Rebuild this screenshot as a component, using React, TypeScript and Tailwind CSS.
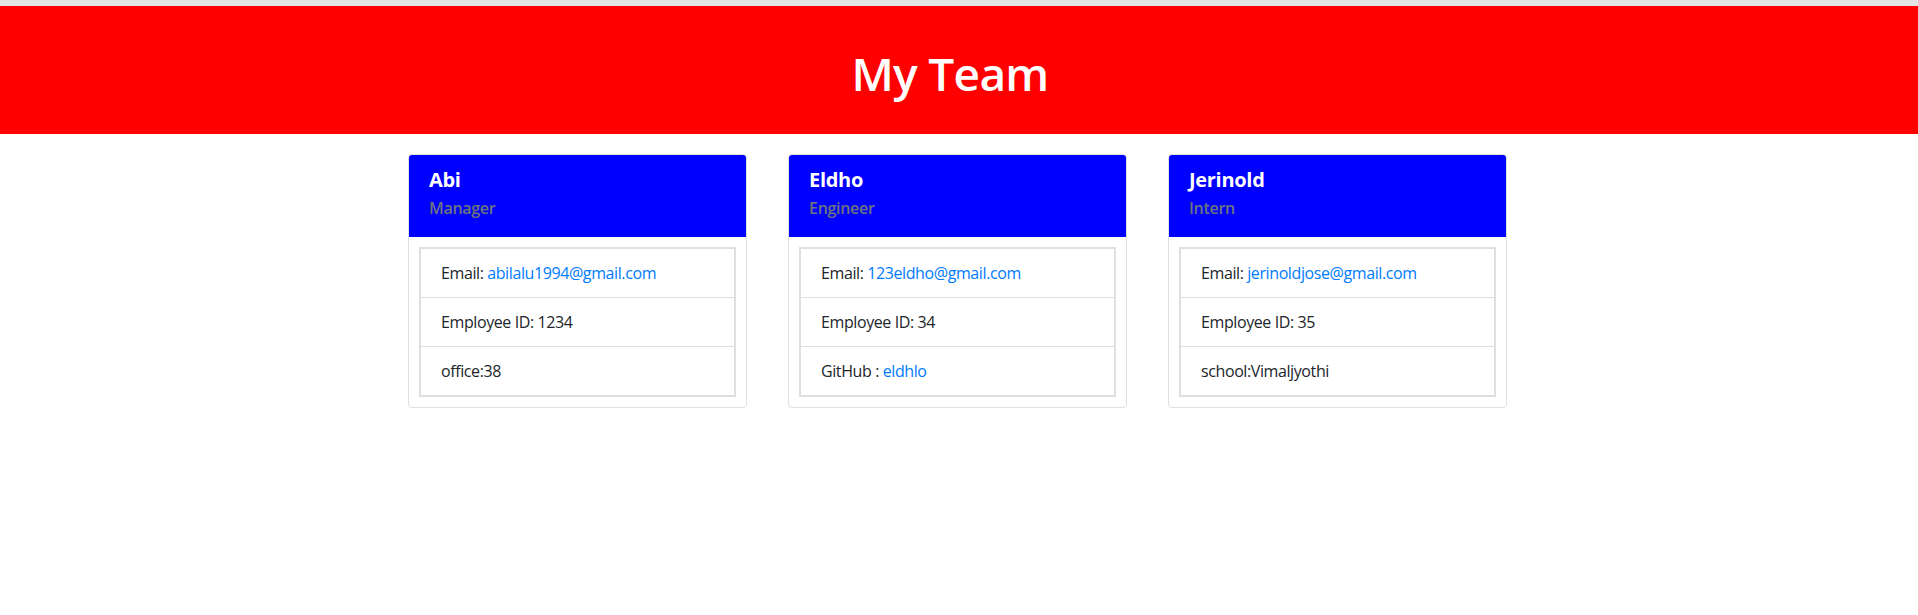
import React from "react";

type Row = { label: string; value: string; link?: boolean };
type Member = { name: string; role: string; rows: Row[] };

const team: Member[] = [
  {
    name: "Abi",
    role: "Manager",
    rows: [
      { label: "Email: ", value: "abilalu1994@gmail.com", link: true },
      { label: "Employee ID: ", value: "1234" },
      { label: "office:", value: "38" },
    ],
  },
  {
    name: "Eldho",
    role: "Engineer",
    rows: [
      { label: "Email: ", value: "123eldho@gmail.com", link: true },
      { label: "Employee ID: ", value: "34" },
      { label: "GitHub : ", value: "eldhlo", link: true },
    ],
  },
  {
    name: "Jerinold",
    role: "Intern",
    rows: [
      { label: "Email: ", value: "jerinoldjose@gmail.com", link: true },
      { label: "Employee ID: ", value: "35" },
      { label: "school:", value: "Vimaljyothi" },
    ],
  },
];

function Card({ m }: { m: Member }) {
  return (
    <div className="w-[339px] rounded-[4px] border border-[#dfdfdf] bg-white overflow-hidden">
      <div className="h-[82px] bg-[#0000ff] px-5 pt-[13px]">
        <div className="text-[20px] leading-[24px] font-bold text-white tracking-[-0.3px]">{m.name}</div>
        <div className="mt-[7px] text-[16px] leading-[19px] font-semibold text-[#6c757d] tracking-[-0.3px]">{m.role}</div>
      </div>
      <div className="p-[10px]">
        <div className="border-2 border-[#dfdfdf]">
          {m.rows.map((r, i) => (
            <div
              key={i}
              className={
                "flex items-center px-5 text-[16px] leading-[24px] text-[#212529] tracking-[-0.4px] " +
                (i > 0 ? "border-t border-[#dfdfdf] h-[49px]" : "h-[48px]")
              }
            >
              <span className="whitespace-pre">{r.label}</span>
              <span className={r.link ? "text-[#007bff]" : ""}>{r.value}</span>
            </div>
          ))}
        </div>
      </div>
    </div>
  );
}

export default function App() {
  return (
    <div
      className="min-h-[615px] bg-white"
      style={{ fontFamily: '"Open Sans", "Noto Sans", sans-serif' }}
    >
      <div className="h-[6px] bg-[#e4e4e4]" />
      <div className="h-[128px] bg-[#ff0000] flex items-center justify-center pr-[18px]">
        <h1 className="text-[46px] leading-none font-semibold text-white pt-[5px] tracking-[-0.7px]">My Team</h1>
      </div>
      <div className="mt-[20px] flex justify-center gap-[41px] pr-[3px]">
        {team.map((m) => (
          <Card key={m.name} m={m} />
        ))}
      </div>
    </div>
  );
}
